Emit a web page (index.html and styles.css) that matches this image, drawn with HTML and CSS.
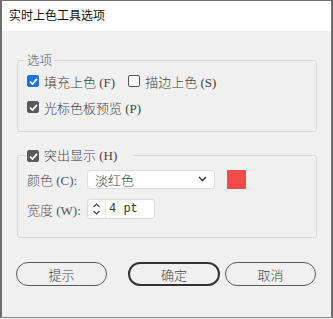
FILE: index.html
```html
<!DOCTYPE html>
<html>
<head>
	<meta charset="utf-8">
	<link rel="stylesheet" href="styles.css">
</head>
<body>

	<div class="window">
		<div class="titlebar">实时上色工具选项</div>

		<div class="content">
			<div class="group group-options">
				<div class="group-title">选项</div>
				<div class="row">
					<label class="check"><span class="box checked blue"><svg width="9" height="9" viewBox="0 0 9 9"><path d="M1 4.6 L3.5 7 L8 1.8" fill="none" stroke="#fff" stroke-width="1.8"/></svg></span>填充上色 (F)</label>
					<label class="check"><span class="box"></span>描边上色 (S)</label>
				</div>
				<div class="row">
					<label class="check"><span class="box checked"><svg width="9" height="9" viewBox="0 0 9 9"><path d="M1 4.6 L3.5 7 L8 1.8" fill="none" stroke="#fff" stroke-width="1.8"/></svg></span>光标色板预览 (P)</label>
				</div>
			</div>

			<div class="group group-highlight">
				<div class="group-title">
					<label class="check"><span class="box checked"><svg width="9" height="9" viewBox="0 0 9 9"><path d="M1 4.6 L3.5 7 L8 1.8" fill="none" stroke="#fff" stroke-width="1.8"/></svg></span>突出显示 (H)</label>
				</div>
				<div class="field">
					<span class="field-label">颜色 (C):</span>
					<div class="select">
						<span>淡红色</span>
						<svg width="9" height="6" viewBox="0 0 9 6"><path d="M1 1 L4.5 4.5 L8 1" fill="none" stroke="#333" stroke-width="1.4"/></svg>
					</div>
					<div class="swatch"></div>
				</div>
				<div class="field">
					<span class="field-label">宽度 (W):</span>
					<div class="numinput">
						<div class="spin">
							<svg width="9" height="16" viewBox="0 0 9 16"><path d="M1.5 6 L4.5 3 L7.5 6 M1.5 10 L4.5 13 L7.5 10" fill="none" stroke="#444" stroke-width="1.2"/></svg>
						</div>
						<span class="numval">4 pt</span>
					</div>
				</div>
			</div>

			<div class="buttons">
				<button class="btn">提示</button>
				<button class="btn primary">确定</button>
				<button class="btn">取消</button>
			</div>
		</div>
	</div>

</body>
</html>
```

FILE: styles.css
```css
html, body {
	margin: 0px;
	padding: 0px;
	background: #f0f0f0;
}

body {
	width: 333px;
	height: 319px;
	overflow: hidden;
	font-family: "Liberation Serif", "Noto Sans CJK SC", serif;
	font-size: 13px;
	font-weight: 300;
	color: #444;
}

.window {
	box-sizing: border-box;
	width: 333px;
	height: 318px;
	border: 2px solid #6e6e6e;
	border-top: 1px solid #6e6e6e;
	border-bottom: 1px solid #8a8a8a;
	background: #f0f0f0;
}

.titlebar {
	height: 30px;
	background: #fff;
	padding-left: 7px;
	font-family: "Noto Sans CJK SC", sans-serif;
	font-size: 12px;
	font-weight: 400;
	line-height: 28px;
	color: #111;
}

.content {
	padding: 0px 14px 0px 15px;
}

.group {
	border: 1px solid #d8d8d8;
	border-radius: 3px;
	padding: 0px 9px;
}

.group-options {
	margin-top: 29px;
	height: 70px;
}

.group-highlight {
	margin-top: 23px;
	height: 81px;
}

.group-title {
	display: flex;
	width: fit-content;
	margin-top: -9px;
	margin-left: -3px;
	padding: 0px 3px;
	background: #f0f0f0;
	line-height: 16px;
	font-family: "Noto Sans CJK SC", sans-serif;
	font-size: 12.5px;
	color: #555;
}

.group-highlight .group-title {
	margin-top: -8px;
	margin-left: -1px;
	padding: 0px 4px 0px 1px;
}

.row {
	display: flex;
	align-items: center;
	height: 26px;
}

.group-options .row:first-of-type {
	margin-top: 2px;
}

.check {
	display: flex;
	align-items: center;
	margin-right: 13px;
	font-size: 13px;
	color: #444;
	white-space: pre;
}

.group-title .check {
	font-family: "Liberation Serif", "Noto Sans CJK SC", serif;
}

.box {
	box-sizing: border-box;
	display: flex;
	align-items: center;
	justify-content: center;
	width: 12px;
	height: 12px;
	margin-right: 5px;
	border: 1px solid #555;
	border-radius: 2px;
	background: #fff;
}

.box.checked {
	background: #5a5a5a;
	border-color: #5a5a5a;
}

.box.checked.blue {
	background: #1f73e0;
	border-color: #1f73e0;
}

.field {
	display: flex;
	align-items: center;
	height: 30px;
}

.group-highlight .field:first-of-type {
	margin-top: 5px;
}

.field-label {
	width: 60px;
	white-space: pre;
	color: #555;
}

.select {
	box-sizing: border-box;
	display: flex;
	align-items: center;
	justify-content: space-between;
	width: 128px;
	height: 19px;
	padding: 0px 7px 0px 7px;
	border: 1px solid #dcdcdc;
	border-radius: 3px;
	background: #fff;
}

.swatch {
	width: 19px;
	height: 19px;
	margin-left: 12px;
	background: #f24b4b;
}

.numinput {
	box-sizing: border-box;
	display: flex;
	align-items: center;
	width: 68px;
	height: 20px;
	border: 1px solid #dcdcdc;
	border-radius: 3px;
	background: #fff;
}

.spin {
	display: flex;
	align-items: center;
	justify-content: center;
	width: 17px;
	height: 18px;
	border-right: 1px solid #e2e2e2;
}

.numval {
	padding-left: 3px;
	font-family: "Liberation Mono", monospace;
	font-size: 12px;
	font-weight: 400;
	color: #333;
}

.buttons {
	display: flex;
	margin-top: 24px;
	margin-left: -1px;
}

.btn {
	box-sizing: border-box;
	width: 91px;
	height: 24px;
	border: 1.5px solid #5a5a5a;
	border-radius: 12px;
	background: #f0f0f0;
	font-family: "Noto Sans CJK SC", sans-serif;
	font-size: 13px;
	font-weight: 300;
	color: #444;
	padding: 0px;
}

.btn.primary {
	width: 92px;
	margin-left: 21px;
	margin-right: 5px;
	border: 2px solid #333;
}
```
